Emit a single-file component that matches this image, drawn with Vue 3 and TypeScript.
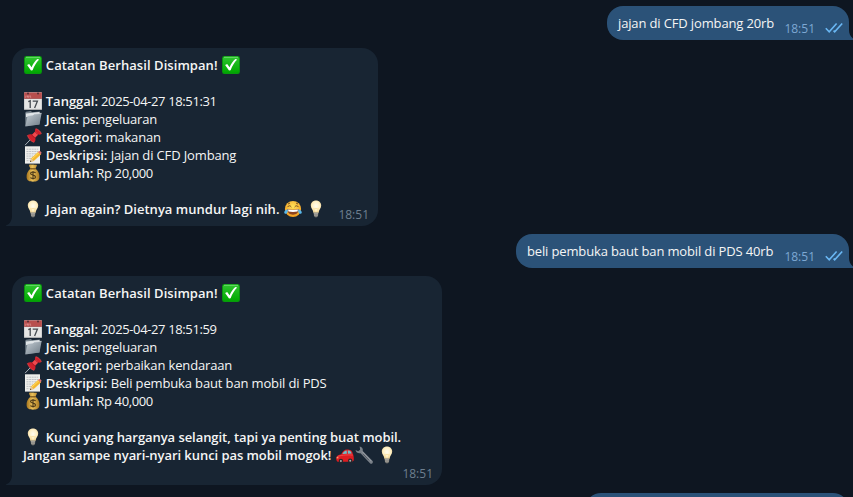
<script setup lang="ts">
interface Part {
  text?: string
  tone?: string
  icon?: string
}
interface Message {
  out: boolean
  time: string
  lines: Part[][]
  kind: string
}

const record = (date: string, category: string, desc: string, amount: string): Part[][] => [
  [{ icon: 'check' }, { text: ' Catatan Berhasil Disimpan! ', tone: 'bold title' }, { icon: 'check' }],
  [],
  [{ icon: 'calendar' }, { text: ' Tanggal:', tone: 'bold' }, { text: ' ' + date, tone: 'digits' }],
  [{ icon: 'folder' }, { text: ' Jenis:', tone: 'bold' }, { text: ' pengeluaran' }],
  [{ icon: 'pin' }, { text: ' Kategori:', tone: 'bold' }, { text: ' ' + category }],
  [{ icon: 'memo' }, { text: ' Deskripsi:', tone: 'bold' }, { text: ' ' + desc }],
  [{ icon: 'money' }, { text: ' Jumlah:', tone: 'bold' }, { text: ' ' + amount, tone: 'digits' }],
  [],
]

const messages: Message[] = [
  { out: true, kind: 'first', time: '18:51', lines: [[{ text: 'jajan di CFD jombang 20rb' }]] },
  {
    out: false,
    kind: 'snack',
    time: '18:51',
    lines: [
      ...record('2025-04-27 18:51:31', 'makanan', 'Jajan di CFD Jombang', 'Rp 20,000'),
      [{ icon: 'bulb' }, { text: ' Jajan again? Dietnya mundur lagi nih. ', tone: 'bold note' }, { icon: 'joy' }, { text: ' ' }, { icon: 'bulb' }],
    ],
  },
  { out: true, kind: 'second', time: '18:51', lines: [[{ text: 'beli pembuka baut ban mobil di PDS 40rb' }]] },
  {
    out: false,
    kind: 'repair',
    time: '18:51',
    lines: [
      ...record('2025-04-27 18:51:59', 'perbaikan kendaraan', 'Beli pembuka baut ban mobil di PDS', 'Rp 40,000'),
      [{ icon: 'bulb' }, { text: ' Kunci yang harganya selangit, tapi ya penting buat mobil.', tone: 'bold snug' }],
      [{ text: 'Jangan sampe nyari-nyari kunci pas mobil mogok! ', tone: 'bold snug' }, { icon: 'car' }, { icon: 'wrench' }, { text: ' ' }, { icon: 'bulb' }],
    ],
  },
  { out: true, kind: 'next', time: '', lines: [] },
]
</script>

<template>
  <svg class="defs" aria-hidden="true">
    <defs>
      <linearGradient id="g-check" x1="0" y1="0" x2="0" y2="1">
        <stop offset="0" stop-color="#2fc52f" /><stop offset="1" stop-color="#00a800" />
      </linearGradient>
      <linearGradient id="g-folder" x1="0" y1="0" x2="1" y2="1">
        <stop offset="0" stop-color="#c3ccd3" /><stop offset="1" stop-color="#6f7c87" />
      </linearGradient>
      <radialGradient id="g-joy" cx=".5" cy=".35" r=".65">
        <stop offset="0" stop-color="#ffe25a" /><stop offset="1" stop-color="#f29a1c" />
      </radialGradient>
      <radialGradient id="g-bulb" cx=".5" cy=".45" r=".6">
        <stop offset="0" stop-color="#fffdf0" /><stop offset=".6" stop-color="#fff0c4" /><stop offset="1" stop-color="#e6c98c" />
      </radialGradient>
      <linearGradient id="g-money" x1="0" y1="0" x2="1" y2="0">
        <stop offset="0" stop-color="#a7751c" /><stop offset=".45" stop-color="#eac05a" /><stop offset="1" stop-color="#a87820" />
      </linearGradient>
      <symbol id="check" viewBox="0 0 18 18">
        <rect x=".1" y=".1" width="17.8" height="17.8" rx="2.2" fill="#079b0b" />
        <rect x=".9" y=".8" width="16.2" height="16" rx="1.8" fill="url(#g-check)" />
        <path d="M2 1.3h14" stroke="#8be28b" stroke-width=".7" />
        <path d="M3.1 9.1 5.2 8 7.6 11.2C9 8.1 10.8 5.4 13.3 3.1L15.2 3.4C12.3 6.4 10.1 10 8.6 14.3L7 14.4Z" fill="#fff" />
      </symbol>
      <symbol id="calendar" viewBox="0 0 18 18">
        <rect x=".1" y=".3" width="17.8" height="17.5" rx=".6" fill="#e6e6e5" />
        <path d="M.1.4h17.8v6.2H.1z" fill="#b84e4d" />
        <path d="M.2 6.5h17.6" stroke="#993d3e" stroke-width=".6" />
        <circle cx="4" cy="1.6" r="1" fill="#522f36" /><circle cx="14" cy="1.6" r="1" fill="#522f36" />
        <path d="M2 3.5v1.7H1.2M3.5 3.5v1.7h1.3V3.5M6.2 3.4v1.8h1" fill="none" stroke="#e5a9a8" stroke-width=".6" />
        <path d="M4.3 9.7 6.2 8.8V16M8.7 9.2h4.7L10.6 16" fill="none" stroke="#454a50" stroke-width="1.3" />
        <path d="M.3 17.4h17.4" stroke="#aaa" stroke-width=".7" />
      </symbol>
      <symbol id="folder" viewBox="0 0 18 18">
        <path d="M1.2 3.1 2 1.8 7 .9l1 1.4 7.8-.9.6 2.2-1 11L1.4 16Z" fill="#77838d" />
        <path d="M2 3.4 15.4 2v4L2 7Z" fill="#dfe4e7" />
        <path d="M3.7 5.6 9 5l1.1-1 7.5-.7-2.1 11.3L1.3 16.5Z" fill="url(#g-folder)" />
        <path d="M3.7 5.6 9 5l1.1-1 7.5-.7" fill="none" stroke="#e5eaed" stroke-width=".6" />
      </symbol>
      <symbol id="pin" viewBox="0 0 18 18">
        <path d="M7.1 10.8 1.1 17.1" stroke="#a4acb4" stroke-width="1" />
        <path d="M3.3 7.2c1.5-1.1 3.1-1.2 4.7-.6l3.1-3c-.4-1.4-.1-2.4.7-3 2.6.6 4.9 2.8 5.6 5.3-.8.8-2 .9-3.2.6l-3 3.2c.6 1.8.3 3.5-1 4.9-3.2-1-5.8-3.9-6.9-7.4Z" fill="#cf202b" />
        <path d="M8.2 6.7 11.4 3.6l2.8 2.8-3.1 3.2Z" fill="#ef4a4e" />
        <path d="M11.8.7c2.6.6 4.9 2.8 5.6 5.2M3.3 7.3c1.3 3.4 3.7 6.1 6.7 7.1" fill="none" stroke="#e75555" stroke-width=".6" />
        <path d="M11.2 3.7c.6 1.4 1.6 2.4 3 2.8M8 6.8c.6 1.6 1.6 2.4 3.1 2.9" fill="none" stroke="#9b1824" stroke-width=".6" />
      </symbol>
      <symbol id="memo" viewBox="0 0 18 18">
        <path d="M1 .3h15v17.3H1z" fill="#eeeeeb" />
        <path d="M2.5 3.2h11.7M2.5 5.5h11.7M2.5 7.8h9.5M2.5 10.1H9M2.5 12.4h5M2.5 14.7h3" stroke="#a9aeb3" stroke-width=".7" stroke-dasharray="2 .6" />
        <path d="M6 15.9 7.2 12.2 14.6 5.6 17.2 8.3 9.8 15Z" fill="#f5b72d" />
        <path d="M8 13 15.3 6.4" stroke="#ffdc5f" stroke-width="1" />
        <path d="m14.1 6 1.1-1c.8-.5 2.6 1.2 2.3 2.1l-1 1.5Z" fill="#df7777" />
        <path d="m6 15.9 1.2-3.7 2.6 2.8Z" fill="#e3c399" /><path d="m6 15.9.4-1.3.9.9Z" fill="#252525" />
      </symbol>
      <symbol id="money" viewBox="0 0 18 18">
        <path d="M6.6 4.6C5.6 3 4.8 1.6 5.1.9 6.4.2 7.7 1 9 .6c1.2.4 2.5-.3 3.9.3.1 1.1-1 2.3-1.5 3.7 3 2.2 4.4 5.9 4 9-.3 3.2-2.9 4.1-6.4 4.1s-6.1-.9-6.4-4.1c-.4-3.1 1-6.8 4-9Z" fill="url(#g-money)" />
        <path d="M6.3 4.8h5.4" stroke="#73501b" stroke-width="1.2" />
        <path d="M11.6 8.8C10.4 7.6 6.6 7.5 6.6 9.4c0 2.2 4.9 1.3 4.9 3.5 0 1.9-3.6 2-5.1.7M9 6.9v8.6" fill="none" stroke="#493616" stroke-width="1.1" />
      </symbol>
      <symbol id="bulb" viewBox="0 0 18 18">
        <path d="M9 .4c3.2 0 5.2 2.2 5.2 5.2 0 2.9-2.3 4.2-2.7 7.3h-5C6.1 9.8 3.8 8.5 3.8 5.6 3.8 2.6 5.8.4 9 .4Z" fill="url(#g-bulb)" />
        <path d="m7.5 12.3-.8-4 1.2.7L9 8.1l1.1.9 1.2-.7-.8 4" fill="none" stroke="#f6d37d" stroke-width=".5" />
        <path d="M6.6 12.6h4.8l-.4 3.4-1 1.2H8L7 16Z" fill="#7d7c78" />
        <path d="M6.8 13.3h4.3M7 15h3.8" stroke="#c1beb5" stroke-width=".7" />
      </symbol>
      <symbol id="joy" viewBox="0 0 18 18">
        <circle cx="9" cy="9" r="8.1" fill="url(#g-joy)" />
        <path d="M3.5 7.1c1-1.7 2.7-1.7 3.8-.1M10.7 7c1.1-1.6 2.8-1.6 3.8.1M4 4l2-1M14 4l-2-1" fill="none" stroke="#68401b" stroke-width=".9" />
        <path d="M3.3 9.1c3.7.8 7.7.8 11.4 0 0 4-2.4 5.7-5.7 5.7S3.3 13.1 3.3 9.1Z" fill="#8d4420" />
        <path d="M4 9.5c3.4.6 6.6.6 10 0l-.5 2c-2.8.6-6.2.6-9 0Z" fill="#fff" />
        <path d="M3.8 9.2C1.8 9.5.1 11 .2 12.6c.2 1.5 2.1 1.7 2.9.4.6-1 .8-2.2.7-3.8ZM14.2 9.2c2 .3 3.7 1.8 3.6 3.4-.2 1.5-2.1 1.7-2.9.4-.6-1-.8-2.2-.7-3.8Z" fill="#57b6eb" />
      </symbol>
      <symbol id="car" viewBox="0 0 18 18">
        <path d="M.2 12c.1-2.2 2.4-3.2 5-3.8C6.6 5.6 8.4 3.5 11 3.5c3.2 0 5 .7 5.8 4.3 1 2 1.3 5 .8 7l-1.8.9L2 15.8C.6 15.3.1 13.7.2 12Z" fill="#dc1c21" />
        <path d="M6.4 8.1c1.1-2.2 2.4-3.5 4.3-3.6l.2 3.3ZM11.7 4.5c2 0 3.3.5 4 3l-3.8.3Z" fill="#70bdc6" />
        <path d="M1.2 10.9c2-1.6 10-2.4 15.5-1.8" fill="none" stroke="#ff6464" stroke-width=".6" />
        <circle cx="4.9" cy="15" r="2.2" fill="#28272b" /><circle cx="14.2" cy="14.8" r="2.2" fill="#28272b" />
        <circle cx="4.9" cy="15" r="1" fill="#aaa" /><circle cx="14.2" cy="14.8" r="1" fill="#aaa" />
        <path d="M.7 11.8h1.7" stroke="#ffd28e" stroke-width="1" />
      </symbol>
      <symbol id="wrench" viewBox="0 0 18 18">
        <path d="M4.7.5c2.4.4 3.6 2.3 3 4.5l9.9 10.1c.5.8.3 1.7-.4 2.3-.7.5-1.6.4-2.2-.2L5.5 7.2C3.2 7.7 1 6.5.5 4l2.7 1.3L5.1 3.7Z" fill="#798088" />
        <path d="m7.1 5.5 9.3 9.7" stroke="#b0b6bc" stroke-width=".6" />
        <path d="M8.2 8.1 14 14.2" stroke="#4b515a" stroke-width=".8" />
      </symbol>
    </defs>
  </svg>
  <main class="chat">
    <div v-for="m in messages" :key="m.kind" class="row" :class="{ outgoing: m.out }">
      <article class="bubble" :class="[m.out ? 'out' : 'in', m.kind]">
        <div class="body">
          <div v-for="(line, i) in m.lines" :key="i" class="line">
            <template v-for="(p, j) in line" :key="j">
              <svg v-if="p.icon" class="emoji"><use :href="'#' + p.icon" /></svg>
              <span v-else :class="p.tone">{{ p.text }}</span>
            </template>
          </div>
        </div>
        <div v-if="m.time" class="meta">
          <span>{{ m.time }}</span>
          <svg v-if="m.out" class="ticks" viewBox="0 0 18 12">
            <path d="M.8 6.3 4.2 9.8 11.6 1.5M8.6 8.6 9.7 9.8 17.2 1.5" />
          </svg>
        </div>
        <svg class="tail" viewBox="0 0 7 16"><path d="M7 0H6v6c0 4-2 8-6 9.5V16h7Z" /></svg>
      </article>
    </div>
  </main>
</template>

<style>
body {
  background: #0e1621;
  overflow: hidden;
}
</style>

<style scoped>
.defs {
  position: absolute;
  width: 0;
  height: 0;
}
.chat {
  box-sizing: border-box;
  height: 497px;
  overflow: hidden;
  padding: 6px 4px 0 12px;
  display: flex;
  flex-direction: column;
  gap: 8px;
  background: #0e1621;
  font: 13px/18px "Open Sans", "Noto Sans", sans-serif;
  color: #f5f5f5;
}
.row {
  display: flex;
  flex-shrink: 0;
}
.outgoing {
  justify-content: flex-end;
}
.bubble {
  position: relative;
  box-sizing: border-box;
  display: flex;
  justify-content: space-between;
  padding: 8px 10px 8px 11px;
  border-radius: 16px;
}
.in {
  background: #182533;
  border-bottom-left-radius: 0;
}
.out {
  height: 34px;
  padding-right: 6px;
  background: #2b5278;
  border-bottom-right-radius: 0;
}
.first { width: 242px; }
.second { width: 333px; }
.snack { width: 366px; height: 178px; }
.repair { width: 430px; height: 209px; flex-direction: column; }
.next { width: 264px; }
.line {
  height: 18px;
  white-space: pre;
  letter-spacing: -0.14px;
}
.digits {
  letter-spacing: -0.37px;
}
.bold {
  font-weight: 600;
  letter-spacing: 0;
}
.title {
  letter-spacing: 0.06px;
}
.note {
  letter-spacing: 0.02px;
}
.snug {
  letter-spacing: -0.06px;
}
.emoji {
  width: 18px;
  height: 18px;
  margin: 0 0.4px 0 1px;
  vertical-align: top;
}
.meta {
  display: flex;
  align-self: flex-end;
  gap: 10px;
  font-size: 12px;
  line-height: 16px;
  color: #6d7f8f;
  margin-bottom: -5px;
}
.in .meta {
  margin-right: -1px;
}
.out .meta {
  color: #7da8d3;
}
.ticks {
  width: 18px;
  height: 12px;
  margin-top: 1px;
  fill: none;
  stroke: #6ab7f3;
  stroke-width: 1.6;
}
.tail {
  position: absolute;
  bottom: 0;
  left: -6px;
  width: 7px;
  height: 16px;
  fill: #182533;
}
.out .tail {
  left: auto;
  right: -6px;
  transform: scaleX(-1);
  fill: #2b5278;
}
</style>
